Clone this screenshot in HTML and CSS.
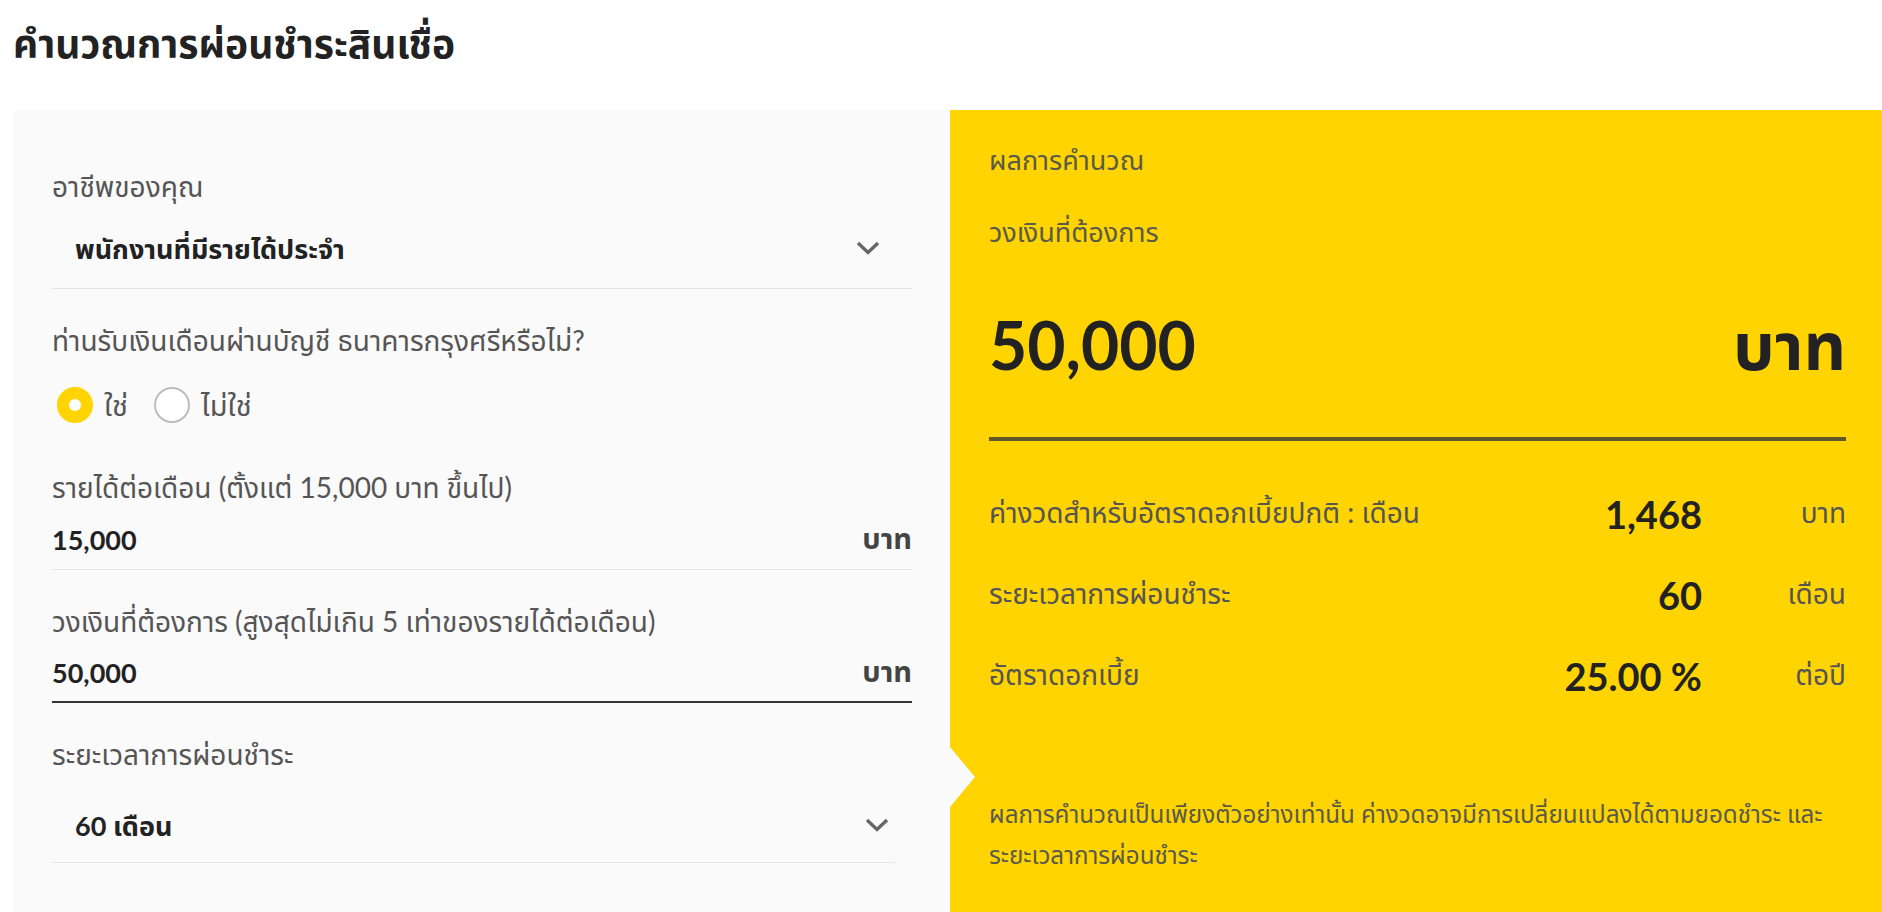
FILE: index.html
```html
<!DOCTYPE html>
<html lang="th">
<head>
<meta charset="utf-8">
<title>คำนวณการผ่อนชำระสินเชื่อ</title>
<link rel="stylesheet" href="styles.css">
</head>
<body>
<div class="page">
  <h1 class="title">คำนวณการผ่อนชำระสินเชื่อ</h1>
  <div class="calc">
    <section class="form">
      <div class="label label-first">อาชีพของคุณ</div>
      <div class="select select-wide">
        <span class="select-value">พนักงานที่มีรายได้ประจำ</span>
        <svg class="chev" width="24" height="14" viewBox="0 0 24 14"><polyline points="2,2 12,11.5 22,2" fill="none" stroke="#666" stroke-width="3.4"/></svg>
      </div>
      <div class="label label-gap">ท่านรับเงินเดือนผ่านบัญชี ธนาคารกรุงศรีหรือไม่?</div>
      <div class="radios">
        <label class="option"><span class="radio radio-on"></span><span class="option-text">ใช่</span></label>
        <label class="option"><span class="radio radio-off"></span><span class="option-text">ไม่ใช่</span></label>
      </div>
      <div class="label label-after-radio">รายได้ต่อเดือน (ตั้งแต่ 15,000 บาท ขึ้นไป)</div>
      <div class="input">
        <span class="input-value">15,000</span>
        <span class="input-unit">บาท</span>
      </div>
      <div class="label label-gap">วงเงินที่ต้องการ (สูงสุดไม่เกิน 5 เท่าของรายได้ต่อเดือน)</div>
      <div class="input input-active">
        <span class="input-value">50,000</span>
        <span class="input-unit">บาท</span>
      </div>
      <div class="label label-gap">ระยะเวลาการผ่อนชำระ</div>
      <div class="select select-narrow">
        <span class="select-value">60 เดือน</span>
        <svg class="chev" width="24" height="14" viewBox="0 0 24 14"><polyline points="2,2 12,11.5 22,2" fill="none" stroke="#666" stroke-width="3.4"/></svg>
      </div>
    </section>
    <section class="result">
      <div class="r-heading">ผลการคำนวณ</div>
      <div class="r-sub">วงเงินที่ต้องการ</div>
      <div class="r-big">
        <span class="r-big-num">50,000</span>
        <span class="r-big-unit">บาท</span>
      </div>
      <div class="r-rule"></div>
      <div class="r-rows">
        <div class="r-row">
          <span class="r-label">ค่างวดสำหรับอัตราดอกเบี้ยปกติ : เดือน</span>
          <span class="r-value">1,468</span>
          <span class="r-unit">บาท</span>
        </div>
        <div class="r-row">
          <span class="r-label">ระยะเวลาการผ่อนชำระ</span>
          <span class="r-value">60</span>
          <span class="r-unit">เดือน</span>
        </div>
        <div class="r-row">
          <span class="r-label">อัตราดอกเบี้ย</span>
          <span class="r-value">25.00 %</span>
          <span class="r-unit">ต่อปี</span>
        </div>
      </div>
      <p class="r-note">ผลการคำนวณเป็นเพียงตัวอย่างเท่านั้น ค่างวดอาจมีการเปลี่ยนแปลงได้ตามยอดชำระ และ<br>ระยะเวลาการผ่อนชำระ</p>
    </section>
  </div>
</div>
</body>
</html>
```

FILE: styles.css
```css
html, body {
  margin: 0;
  padding: 0;
  background: #ffffff;
}

body {
  font-family: Lato, "Noto Sans Thai", Loma, Garuda, "Noto Sans", sans-serif;
  color: #222;
  overflow: hidden;
}

.page {
  padding: 0 0 0 13px;
}

.title {
  margin: 0;
  height: 110px;
  box-sizing: border-box;
  padding-top: 18px;
  font-size: 39px;
  line-height: 50px;
  font-weight: 700;
  color: #222;
}

.calc {
  display: flex;
  height: 802px;
}

.form {
  width: 937px;
  flex: none;
  box-sizing: border-box;
  background: #fafafa;
  padding: 61px 38px 0 39px;
}

.label {
  font-size: 28px;
  line-height: 30px;
  color: #555;
}

.label-gap {
  margin-top: 36px;
}

.label-after-radio {
  margin-top: 49px;
}

.select {
  display: flex;
  align-items: center;
  justify-content: space-between;
  border-bottom: 1px solid #e4e4e4;
  box-sizing: border-box;
}

.select-wide {
  height: 88px;
  padding: 12px 32px 0 23px;
}

.select-narrow {
  width: 843px;
  height: 94px;
  padding: 24px 6px 0 23px;
}

.select-value {
  font-size: 27px;
  font-weight: 700;
  color: #222;
}

.chev {
  display: block;
  margin-top: -6px;
}

.radios {
  display: flex;
  align-items: center;
  gap: 26px;
  margin-top: 32px;
  padding-left: 5px;
  height: 36px;
}

.option {
  display: flex;
  align-items: center;
  gap: 11px;
}

.radio {
  display: block;
  width: 36px;
  height: 36px;
  border-radius: 50%;
  box-sizing: border-box;
  background: #fff;
}

.radio-on {
  border: 12px solid #ffd400;
}

.radio-off {
  border: 2px solid #bdbdbd;
}

.option-text {
  font-size: 29px;
  line-height: 36px;
  color: #555;
}

.input {
  display: flex;
  align-items: center;
  justify-content: space-between;
  height: 68px;
  box-sizing: border-box;
  padding-top: 8px;
  border-bottom: 1px solid #e4e4e4;
}

.input-active {
  height: 67px;
  border-bottom: 2px solid #333;
}

.input-value {
  font-size: 27px;
  font-weight: 700;
  color: #222;
}

.input-unit {
  font-size: 29px;
  font-weight: 700;
  color: #444;
}

.result {
  position: relative;
  flex: 1;
  background: #ffd400;
  padding: 35px 36px 0 39px;
}

.result::before {
  content: "";
  position: absolute;
  left: 0;
  top: 637px;
  border-top: 30px solid transparent;
  border-bottom: 30px solid transparent;
  border-left: 25px solid #fafafa;
}

.r-heading,
.r-sub {
  font-size: 27px;
  line-height: 30px;
  color: #5a5a4a;
}

.r-sub {
  margin-top: 42px;
}

.r-big {
  display: flex;
  justify-content: space-between;
  align-items: baseline;
  margin-top: 58px;
  height: 80px;
  line-height: 80px;
  font-weight: 700;
  font-size: 66px;
  color: #222;
}

.r-rule {
  margin-top: 52px;
  height: 4px;
  background: #5e582c;
}

.r-rows {
  display: flex;
  flex-direction: column;
  gap: 31px;
  margin-top: 48px;
}

.r-row {
  display: grid;
  grid-template-columns: 1fr auto 144px;
  align-items: center;
  height: 50px;
}

.r-label {
  font-size: 28px;
  color: #555;
}

.r-value {
  font-size: 38px;
  font-weight: 700;
  color: #222;
  text-align: right;
}

.r-unit {
  font-size: 28px;
  color: #555;
  text-align: right;
}

.r-note {
  margin: 92px 0 0;
  font-size: 24.2px;
  line-height: 41px;
  color: #5a5a4a;
}
```
